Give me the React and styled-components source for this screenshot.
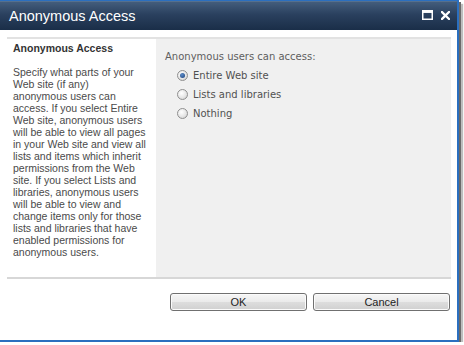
import React from 'react'
import styled, { createGlobalStyle } from 'styled-components'

const Global = createGlobalStyle`
  html, body {
    margin: 0;
    background: #ffffff;
  }
`

const Dialog = styled.div`
  box-sizing: content-box;
  width: 457px;
  height: 339px;
  background: #ffffff;
  border-style: solid;
  border-color: #2b6fbf;
  border-width: 1px 2px 2px 0;
  box-shadow: 2px 2px 0 #6a6a6a, 4px 4px 1px #bdbdbd;
  display: flex;
  flex-direction: column;
`

const TitleBar = styled.div`
  height: 29px;
  flex: none;
  display: flex;
  align-items: center;
  justify-content: space-between;
  padding: 0 7px 0 9px;
  background: linear-gradient(#435d7c 0%, #2a405e 45%, #1a2e48 100%);
  border-top: 1px solid #55708e;
  box-sizing: border-box;
`

const Title = styled.div`
  font-family: "Liberation Sans", Arial, sans-serif;
  font-size: 14.5px;
  color: #ffffff;
  padding-bottom: 1px;
`

const TitleIcons = styled.div`
  display: flex;
  align-items: center;
  gap: 8px;
  padding-bottom: 2px;
`

const Body = styled.div`
  padding: 7px 6px 0 7px;
`

const Section = styled.div`
  display: flex;
  height: 238px;
  border-top: 2px solid #e2e2e2;
  border-bottom: 2px solid #d7d7d7;
`

const LeftCol = styled.div`
  width: 149px;
  padding: 3px 4px 0 6px;
  box-sizing: border-box;
  font-family: "Liberation Sans", Tahoma, sans-serif;
`

const Heading = styled.div`
  font-size: 10.5px;
  font-weight: bold;
  line-height: 12px;
  color: #333333;
  margin-bottom: 12px;
`

const Description = styled.p`
  margin: 0;
  font-size: 10.5px;
  line-height: 12px;
  color: #4a4a4a;
  white-space: nowrap;
`

const RightCol = styled.div`
  flex: 1;
  background: #f0f0f0;
  padding: 11px 9px 0 9px;
  font-family: "DejaVu Sans", Verdana, sans-serif;
  font-size: 10px;
`

const Prompt = styled.div`
  line-height: 14px;
  color: #5e5e5e;
`

const Options = styled.div`
  margin-top: 2px;
  padding-left: 12px;
`

const Option = styled.label`
  display: flex;
  align-items: center;
  gap: 5px;
  height: 19px;
  color: #505050;
`

const Radio = styled.span`
  width: 11px;
  height: 11px;
  box-sizing: border-box;
  border-radius: 50%;
  border: 1px solid #8f8f8f;
  background: radial-gradient(circle at 40% 35%, #ffffff 0%, #e6e6e6 55%, #c9c9c9 100%);
  display: flex;
  align-items: center;
  justify-content: center;

  &::after {
    content: '';
    width: 5px;
    height: 5px;
    border-radius: 50%;
    background: ${p => (p.$checked ? 'radial-gradient(circle at 40% 35%, #5b8cc9, #1b3f78)' : 'transparent')};
  }
`

const ButtonRow = styled.div`
  display: flex;
  justify-content: flex-end;
  gap: 6px;
  padding: 14px 1px 0 0;
`

const Button = styled.button`
  width: 137px;
  height: 18px;
  padding: 0;
  border: 1px solid #707070;
  border-radius: 3px;
  background: linear-gradient(#f6f6f6 0%, #ebebeb 48%, #dddddd 52%, #d0d0d0 100%);
  box-shadow: inset 0 0 0 1px #fbfbfb;
  font-family: "Liberation Sans", Tahoma, sans-serif;
  font-size: 11px;
  color: #1e1e1e;
`

const lines = [
  'Specify what parts of your',
  'Web site (if any)',
  'anonymous users can',
  'access. If you select Entire',
  'Web site, anonymous users',
  'will be able to view all pages',
  'in your Web site and view all',
  'lists and items which inherit',
  'permissions from the Web',
  'site. If you select Lists and',
  'libraries, anonymous users',
  'will be able to view and',
  'change items only for those',
  'lists and libraries that have',
  'enabled permissions for',
  'anonymous users.',
]

const options = ['Entire Web site', 'Lists and libraries', 'Nothing']

export default function App () {
  return (
    <>
      <Global />
      <Dialog>
        <TitleBar>
          <Title>Anonymous Access</Title>
          <TitleIcons>
            <svg width="11" height="10" viewBox="0 0 11 10">
              <rect x="0.75" y="0.75" width="9.5" height="8.5" fill="none" stroke="#fff" strokeWidth="1.5" />
              <rect x="0.75" y="0.75" width="9.5" height="2.2" fill="#fff" />
            </svg>
            <svg width="9" height="9" viewBox="0 0 9 9">
              <path d="M1 1 L8 8 M8 1 L1 8" stroke="#fff" strokeWidth="2.3" strokeLinecap="square" />
            </svg>
          </TitleIcons>
        </TitleBar>
        <Body>
          <Section>
            <LeftCol>
              <Heading>Anonymous Access</Heading>
              <Description>
                {lines.map((l, i) => (
                  <React.Fragment key={i}>
                    {l}
                    {i < lines.length - 1 && <br />}
                  </React.Fragment>
                ))}
              </Description>
            </LeftCol>
            <RightCol>
              <Prompt>Anonymous users can access:</Prompt>
              <Options>
                {options.map((o, i) => (
                  <Option key={o}>
                    <Radio $checked={i === 0} />
                    {o}
                  </Option>
                ))}
              </Options>
            </RightCol>
          </Section>
          <ButtonRow>
            <Button>OK</Button>
            <Button>Cancel</Button>
          </ButtonRow>
        </Body>
      </Dialog>
    </>
  )
}
